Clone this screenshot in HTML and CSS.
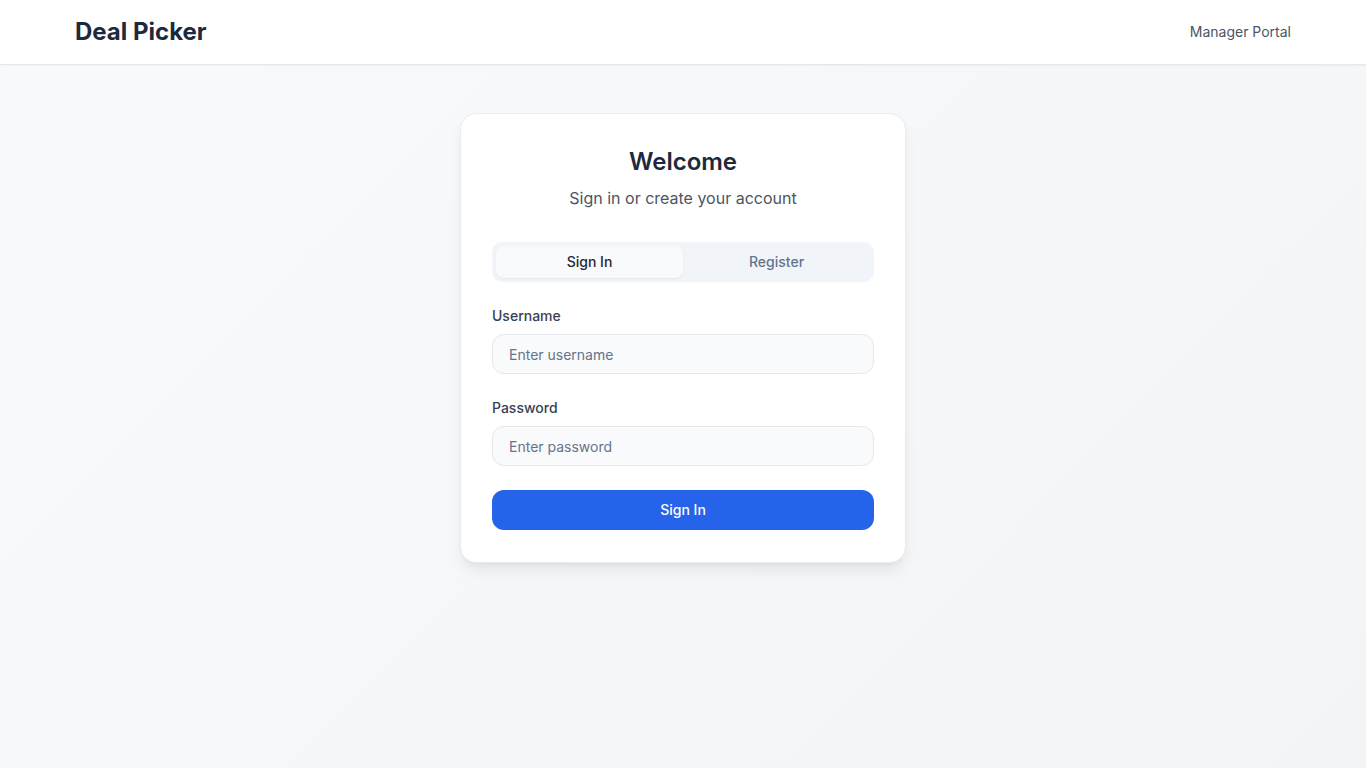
FILE: index.html
```html
<!DOCTYPE html>
<html lang="en">
<head>
<meta charset="utf-8">
<title>Deal Picker</title>
<link rel="stylesheet" href="styles.css">
</head>
<body>
<header class="topbar">
  <div class="topbar-inner">
    <div class="brand">Deal Picker</div>
    <a class="portal-link" href="#">Manager Portal</a>
  </div>
</header>
<main class="main">
  <div class="card">
    <h1 class="title">Welcome</h1>
    <p class="subtitle">Sign in or create your account</p>
    <div class="tabs">
      <button class="tab tab-active">Sign In</button>
      <button class="tab">Register</button>
    </div>
    <form class="form">
      <div class="field">
        <label class="label" for="u">Username</label>
        <input class="input" id="u" type="text" placeholder="Enter username">
      </div>
      <div class="field">
        <label class="label" for="p">Password</label>
        <input class="input" id="p" type="password" placeholder="Enter password">
      </div>
      <button class="submit" type="button">Sign In</button>
    </form>
  </div>
</main>
</body>
</html>
```

FILE: styles.css
```css
* { box-sizing: border-box; }
html, body { margin: 0; padding: 0; }
body {
  font-family: Inter, "Noto Sans", sans-serif;
  min-height: 100vh;
  background: linear-gradient(135deg, #f8fafc 0%, #f3f4f6 100%);
  color: #1f2937;
}
.topbar {
  height: 65px;
  background: #ffffff;
  border-bottom: 1px solid #e5e7eb;
  box-shadow: 0 1px 2px rgba(0,0,0,0.04);
}
.topbar-inner {
  max-width: 1280px;
  margin: 0 auto;
  padding: 0 32px;
  height: 63px;
  display: flex;
  align-items: center;
  justify-content: space-between;
}
.brand {
  font-size: 24px;
  font-weight: 700;
  color: #1e293b;
}
.portal-link {
  font-size: 14px;
  color: #4b5563;
  text-decoration: none;
}
.main {
  display: flex;
  justify-content: center;
  padding-top: 48px;
}
.card {
  width: 446px;
  background: #ffffff;
  border: 1px solid #e9ebef;
  border-radius: 16px;
  padding: 31px 31px 32px;
  box-shadow: 0 10px 15px -3px rgba(0,0,0,0.08), 0 4px 6px -4px rgba(0,0,0,0.06);
}
.title {
  margin: 0;
  padding-top: 1px;
  text-align: center;
  font-size: 24px;
  line-height: 32px;
  font-weight: 600;
  color: #1e293b;
}
.subtitle {
  margin: 8px 0 0;
  text-align: center;
  font-size: 16px;
  line-height: 24px;
  color: #4b5563;
}
.tabs {
  margin-top: 32px;
  display: flex;
  padding: 4px;
  background: #f1f5f9;
  border-radius: 10px;
}
.tab {
  flex: 1;
  height: 32px;
  padding: 0 0 1px;
  border: none;
  background: transparent;
  font-family: inherit;
  font-size: 14px;
  font-weight: 500;
  color: #64748b;
  border-radius: 8px;
  cursor: pointer;
}
.tab-active {
  background: #f8fafc;
  color: #1f2937;
  box-shadow: 0 1px 2px rgba(0,0,0,0.05);
}
.form {
  margin-top: 24px;
  display: flex;
  flex-direction: column;
  gap: 24px;
}
.field {
  display: flex;
  flex-direction: column;
  gap: 8px;
}
.label {
  font-size: 14px;
  line-height: 20px;
  font-weight: 500;
  color: #374151;
}
.input {
  height: 40px;
  width: 100%;
  border: 1px solid #e5e7eb;
  background: #f9fafb;
  border-radius: 12px;
  padding: 0 16px;
  font-family: inherit;
  font-size: 14px;
  color: #1f2937;
  outline: none;
}
.input::placeholder { color: #64748b; }
.submit {
  height: 40px;
  width: 100%;
  padding: 0 0 1px;
  border: none;
  background: #2563eb;
  color: #ffffff;
  border-radius: 12px;
  font-family: inherit;
  font-size: 14px;
  font-weight: 500;
  cursor: pointer;
}
```
